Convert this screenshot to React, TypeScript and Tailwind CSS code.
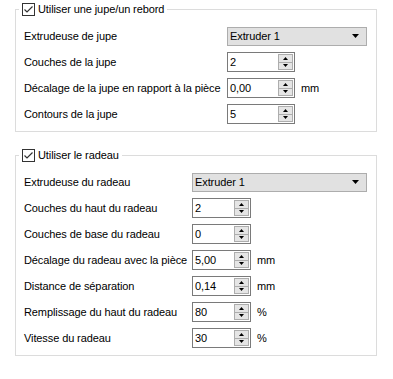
import React from "react";

const Check = () => (
  <svg width="13" height="13" viewBox="0 0 13 13" className="block">
    <rect x="0.5" y="0.5" width="12" height="12" fill="#fff" stroke="#333" />
    <polyline points="2.5,6.5 5,9 10.5,3.5" fill="none" stroke="#333" strokeWidth="1.2" />
  </svg>
);

const Legend = ({ text }: { text: string }) => (
  <div className="-mt-[7px] ml-[3px] flex h-[13px] w-fit items-center gap-[3px] bg-white pl-[3px] pr-[3px]">
    <Check />
    <span className="leading-[13px]">{text}</span>
  </div>
);

const Combo = ({ w }: { w: string }) => (
  <div className={"flex h-[19px] items-center justify-between border border-[#adadad] bg-[#e1e1e1] pl-[2px] pr-[7px] " + w}>
    <span>Extruder 1</span>
    <svg width="7" height="4" viewBox="0 0 7 4" className="block">
      <polygon points="0,0 7,0 3.5,4" fill="#000" />
    </svg>
  </div>
);

const Spin = ({ value, w }: { value: string; w: string }) => (
  <div className={"flex h-[20px] items-center border border-[#7a7a7a] bg-white " + w}>
    <span className="flex-1 pl-[2px]">{value}</span>
    <div className="mr-[1px] flex h-[16px] w-[15px] flex-col border border-[#adadad] bg-[#e5e5e5]">
      <div className="flex flex-1 items-center justify-center border-b border-[#adadad]">
        <svg width="5" height="3" viewBox="0 0 5 3" className="block">
          <polygon points="2.5,0 5,3 0,3" fill="#000" />
        </svg>
      </div>
      <div className="flex flex-1 items-center justify-center">
        <svg width="5" height="3" viewBox="0 0 5 3" className="block">
          <polygon points="0,0 5,0 2.5,3" fill="#000" />
        </svg>
      </div>
    </div>
  </div>
);

type Row = { label: string; kind: "combo" | "spin"; value?: string; unit?: string };

const Group = ({
  title,
  rows,
  ctrlX,
  comboW,
  spinW,
  className,
}: {
  title: string;
  rows: Row[];
  ctrlX: string;
  comboW: string;
  spinW: string;
  className: string;
}) => (
  <div className={"ml-[15px] w-[362px] border border-[#dcdcdc] " + className}>
    <Legend text={title} />
    <div className="mt-[7px] flex flex-col">
      {rows.map((r, i) => (
        <div key={i} className="flex h-[26px] items-center pl-[8px]">
          <div className={ctrlX}>{r.label}</div>
          {r.kind === "combo" ? (
            <Combo w={comboW} />
          ) : (
            <>
              <Spin value={r.value || ""} w={spinW} />
              {r.unit && <span className="ml-[6px]">{r.unit}</span>}
            </>
          )}
        </div>
      ))}
    </div>
  </div>
);

export default function App() {
  return (
    <div
      className="h-[379px] w-[393px] overflow-hidden bg-white text-[11px] tracking-[-0.1px] text-black"
      style={{ fontFamily: '"Liberation Sans", Arial, sans-serif' }}
    >
      <Group
        className="mt-[9px] pb-[4px]"
        title="Utiliser une jupe/un rebord"
        ctrlX="w-[203px] shrink-0 whitespace-nowrap"
        comboW="w-[140px]"
        spinW="w-[68px]"
        rows={[
          { label: "Extrudeuse de jupe", kind: "combo" },
          { label: "Couches de la jupe", kind: "spin", value: "2" },
          { label: "Décalage de la jupe en rapport à la pièce", kind: "spin", value: "0,00", unit: "mm" },
          { label: "Contours de la jupe", kind: "spin", value: "5" },
        ]}
      />
      <Group
        className="mt-[23px] pb-[4px]"
        title="Utiliser le radeau"
        ctrlX="w-[168px] shrink-0 whitespace-nowrap"
        comboW="w-[175px]"
        spinW="w-[59px]"
        rows={[
          { label: "Extrudeuse du radeau", kind: "combo" },
          { label: "Couches du haut du radeau", kind: "spin", value: "2" },
          { label: "Couches de base du radeau", kind: "spin", value: "0" },
          { label: "Décalage du radeau avec la pièce", kind: "spin", value: "5,00", unit: "mm" },
          { label: "Distance de séparation", kind: "spin", value: "0,14", unit: "mm" },
          { label: "Remplissage du haut du radeau", kind: "spin", value: "80", unit: "%" },
          { label: "Vitesse du radeau", kind: "spin", value: "30", unit: "%" },
        ]}
      />
    </div>
  );
}
